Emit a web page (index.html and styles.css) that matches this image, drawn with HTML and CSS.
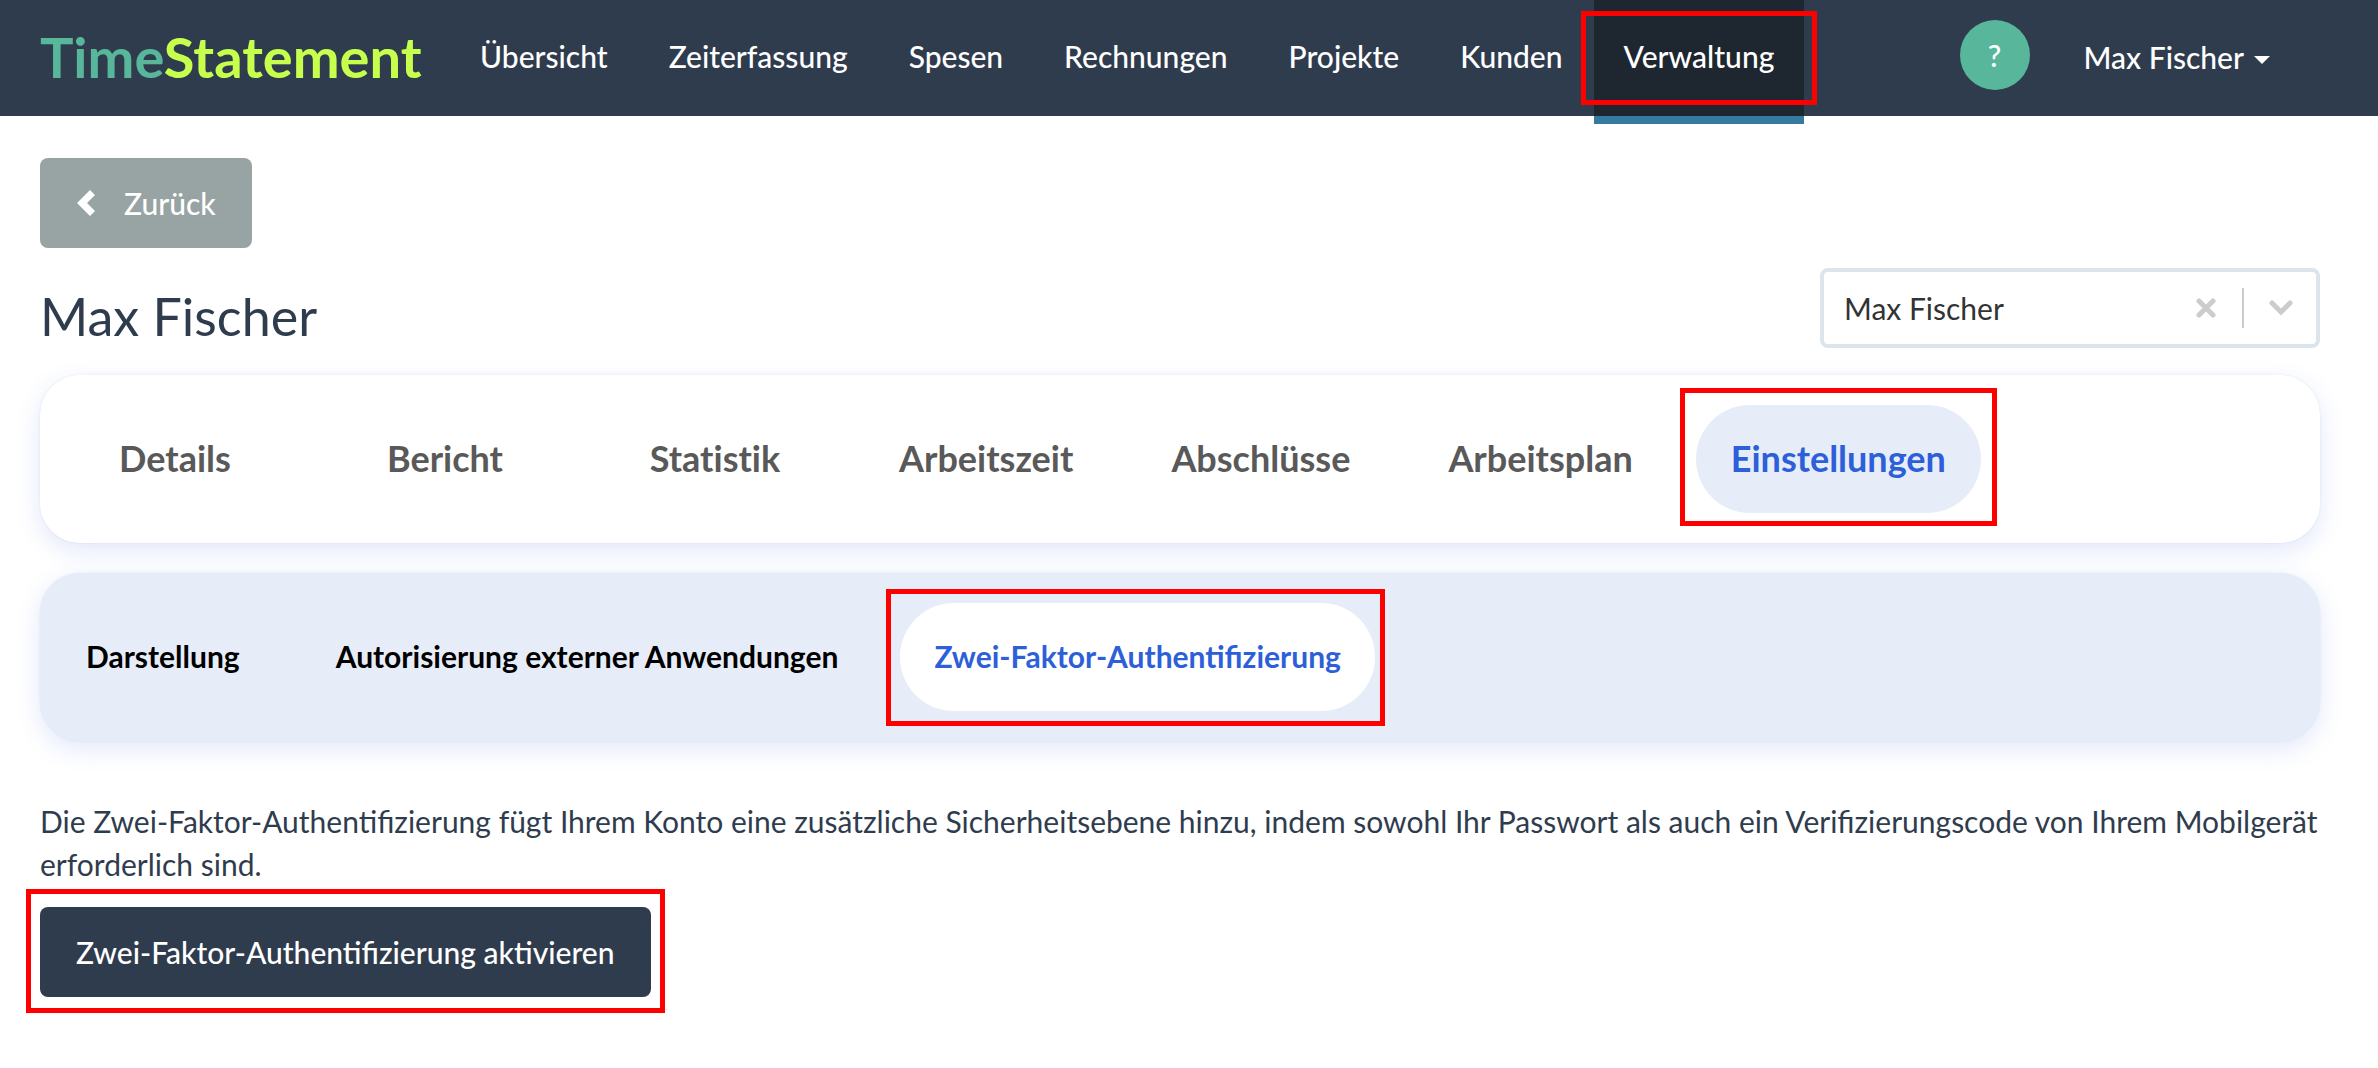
FILE: index.html
```html
<!DOCTYPE html>
<html lang="de">
<head>
<meta charset="utf-8">
<title>TimeStatement</title>
<meta name="viewport" content="width=device-width, initial-scale=1">
<link rel="stylesheet" href="styles.css">
</head>
<body>
<header class="navbar">
  <a class="brand" href="#"><span class="brand-time">Time</span>Statement</a>
  <nav class="menu" aria-label="Hauptnavigation">
    <a class="menu-link" href="#">Übersicht</a>
    <a class="menu-link" href="#">Zeiterfassung</a>
    <a class="menu-link" href="#">Spesen</a>
    <a class="menu-link" href="#">Rechnungen</a>
    <a class="menu-link" href="#">Projekte</a>
    <a class="menu-link" href="#">Kunden</a>
    <a class="menu-link menu-link-active" href="#" aria-current="page">Verwaltung<span class="marker marker-menu"></span></a>
  </nav>
  <div class="account">
    <button class="help" type="button" aria-label="Hilfe">?</button>
    <button class="user" type="button">Max Fischer<span class="caret"></span></button>
  </div>
</header>

<main class="page">
  <button class="btn btn-back" type="button">
    <svg class="back-icon" viewBox="0 0 20 28" aria-hidden="true"><path d="M14 1 L19 6 L11 14 L19 22 L14 27 L1 14 Z"/></svg>
    Zurück
  </button>

  <div class="title-row">
    <h1 class="title">Max Fischer</h1>
    <div class="picker">
      <select class="picker-select" aria-label="Mitarbeiter">
        <option>Max Fischer</option>
      </select>
      <div class="picker-icons">
        <svg class="picker-clear" viewBox="0 0 20 22" aria-hidden="true"><path d="M3 4 L17 18 M17 4 L3 18"/></svg>
        <span class="picker-line"></span>
        <svg class="picker-arrow" viewBox="0 0 26 16" aria-hidden="true"><path d="M4 3 L13 12 L22 3"/></svg>
      </div>
    </div>
  </div>

  <nav class="tabs" aria-label="Mitarbeiter">
    <a class="tab" href="#">Details</a>
    <a class="tab" href="#">Bericht</a>
    <a class="tab" href="#">Statistik</a>
    <a class="tab" href="#">Arbeitszeit</a>
    <a class="tab" href="#">Abschlüsse</a>
    <a class="tab" href="#">Arbeitsplan</a>
    <a class="tab tab-active" href="#" aria-current="page">Einstellungen<span class="marker marker-tab"></span></a>
  </nav>

  <nav class="tabs subtabs" aria-label="Einstellungen">
    <a class="subtab" href="#">Darstellung</a>
    <a class="subtab" href="#">Autorisierung externer Anwendungen</a>
    <a class="subtab subtab-active" href="#" aria-current="page">Zwei-Faktor-Authentifizierung<span class="marker marker-subtab"></span></a>
  </nav>

  <p class="intro">Die Zwei-Faktor-Authentifizierung fügt Ihrem Konto eine zusätzliche Sicherheitsebene hinzu, indem sowohl Ihr Passwort als auch ein Verifizierungscode von Ihrem Mobilgerät erforderlich sind.</p>

  <button class="btn btn-primary" type="button">Zwei-Faktor-Authentifizierung aktivieren<span class="marker marker-button"></span></button>
</main>
</body>
</html>
```
FILE: styles.css
```css
* {
  box-sizing: border-box;
}

body {
  margin: 0;
  background: #fff;
  color: #2f3c4e;
  font-family: Lato, "Liberation Sans", sans-serif;
  font-size: 30px;
  line-height: 43px;
}

a {
  color: inherit;
  text-decoration: none;
}

button,
select {
  border: 0;
  font: inherit;
  color: inherit;
}

/* Top bar */
.navbar {
  display: flex;
  align-items: stretch;
  height: 116px;
  padding: 0 108px 0 40px;
  background: #2f3c4e;
  color: #fff;
}

.brand {
  width: 410px;
  font-size: 56px;
  font-weight: 700;
  line-height: 114px;
  color: #c6ff4c;
}

.brand-time {
  color: #58b79b;
}

.menu {
  display: flex;
  gap: 1px;
  font-weight: 500;
}

.menu-link {
  position: relative;
  height: 116px;
  padding: 35px 30px;
}

.menu-link-active {
  height: 124px;
  background: #1e262f;
  border-bottom: 8px solid #377a9f;
}

.account {
  display: flex;
  align-items: flex-start;
  gap: 54px;
  margin-left: auto;
}

.help {
  width: 70px;
  height: 70px;
  margin-top: 20px;
  padding: 0;
  border-radius: 50%;
  background: #58b79b;
  color: #fff;
  font-weight: 500;
}

.user {
  display: flex;
  align-items: center;
  gap: 10px;
  height: 114px;
  padding: 0;
  background: none;
  font-weight: 500;
}

.caret {
  margin-top: 6px;
  border: 8px solid transparent;
  border-top-color: currentColor;
  border-bottom: 0;
}

/* Content */
.page {
  padding: 42px 58px 54px 40px;
}

.btn {
  position: relative;
  display: flex;
  align-items: center;
  height: 90px;
  padding: 0 36px;
  border-radius: 8px;
  color: #fff;
  font-weight: 500;
}

.btn-back {
  gap: 28px;
  background: #98a4a4;
}

.btn-primary {
  background: #2f3c4e;
}

.back-icon {
  width: 20px;
  height: 28px;
  fill: #fff;
}

.title-row {
  display: flex;
  justify-content: space-between;
  align-items: flex-start;
  margin-top: 20px;
}

.title {
  margin: 18px 0 0;
  font-size: 52px;
  font-weight: 400;
  line-height: 60px;
}

.picker {
  position: relative;
  width: 500px;
}

.picker-select {
  width: 100%;
  height: 80px;
  padding: 0 20px;
  appearance: none;
  border: 4px solid #dce4ec;
  border-radius: 8px;
  background: #fff;
  color: #333;
}

.picker-icons {
  position: absolute;
  inset: 0 26px 0 auto;
  display: flex;
  align-items: center;
  pointer-events: none;
  fill: none;
  stroke: #ccc;
  stroke-linecap: round;
}

.picker-clear {
  width: 20px;
  height: 22px;
  stroke-width: 5;
}

.picker-line {
  width: 2px;
  height: 40px;
  margin: 0 24px 0 26px;
  background: #ccc;
}

.picker-arrow {
  width: 26px;
  height: 16px;
  stroke-width: 5;
}

/* Tab cards */
.tabs {
  display: flex;
  align-items: center;
  height: 168px;
  margin-top: 27px;
  border-radius: 40px;
  background: #fff;
  box-shadow: 0 8px 24px rgba(70, 100, 230, 0.15), 0 0 2px rgba(70, 120, 200, 0.15);
}

.tab {
  position: relative;
  min-width: 242px;
  margin: 0 14px;
  padding: 32px 35px 33px;
  border-radius: 54px;
  color: #595959;
  font-size: 36px;
  font-weight: 700;
  font-variant-ligatures: no-common-ligatures;
  text-align: center;
}

.tab-active {
  background: #e7edf8;
  color: #2d5fd9;
}

.subtabs {
  gap: 28px;
  margin-top: 30px;
  padding: 0 12px;
  background: #e7edf8;
}

.subtab {
  position: relative;
  padding: 32px 34px 33px;
  border-radius: 54px;
  color: #000;
  font-weight: 700;
}

.subtab-active {
  background: #fff;
  color: #2d5fd9;
}

.intro {
  margin: 59px 0 21px;
}

/* Red frames laid over highlighted controls */
.marker {
  position: absolute;
  border: 5px solid #f00;
  pointer-events: none;
}

.marker-menu {
  inset: 11px -13px 11px;
}

.marker-tab {
  inset: -17px -16px -13px;
}

.marker-subtab {
  inset: -14px -10px -15px -14px;
}

.marker-button {
  inset: -18px -14px -16px;
}
```
